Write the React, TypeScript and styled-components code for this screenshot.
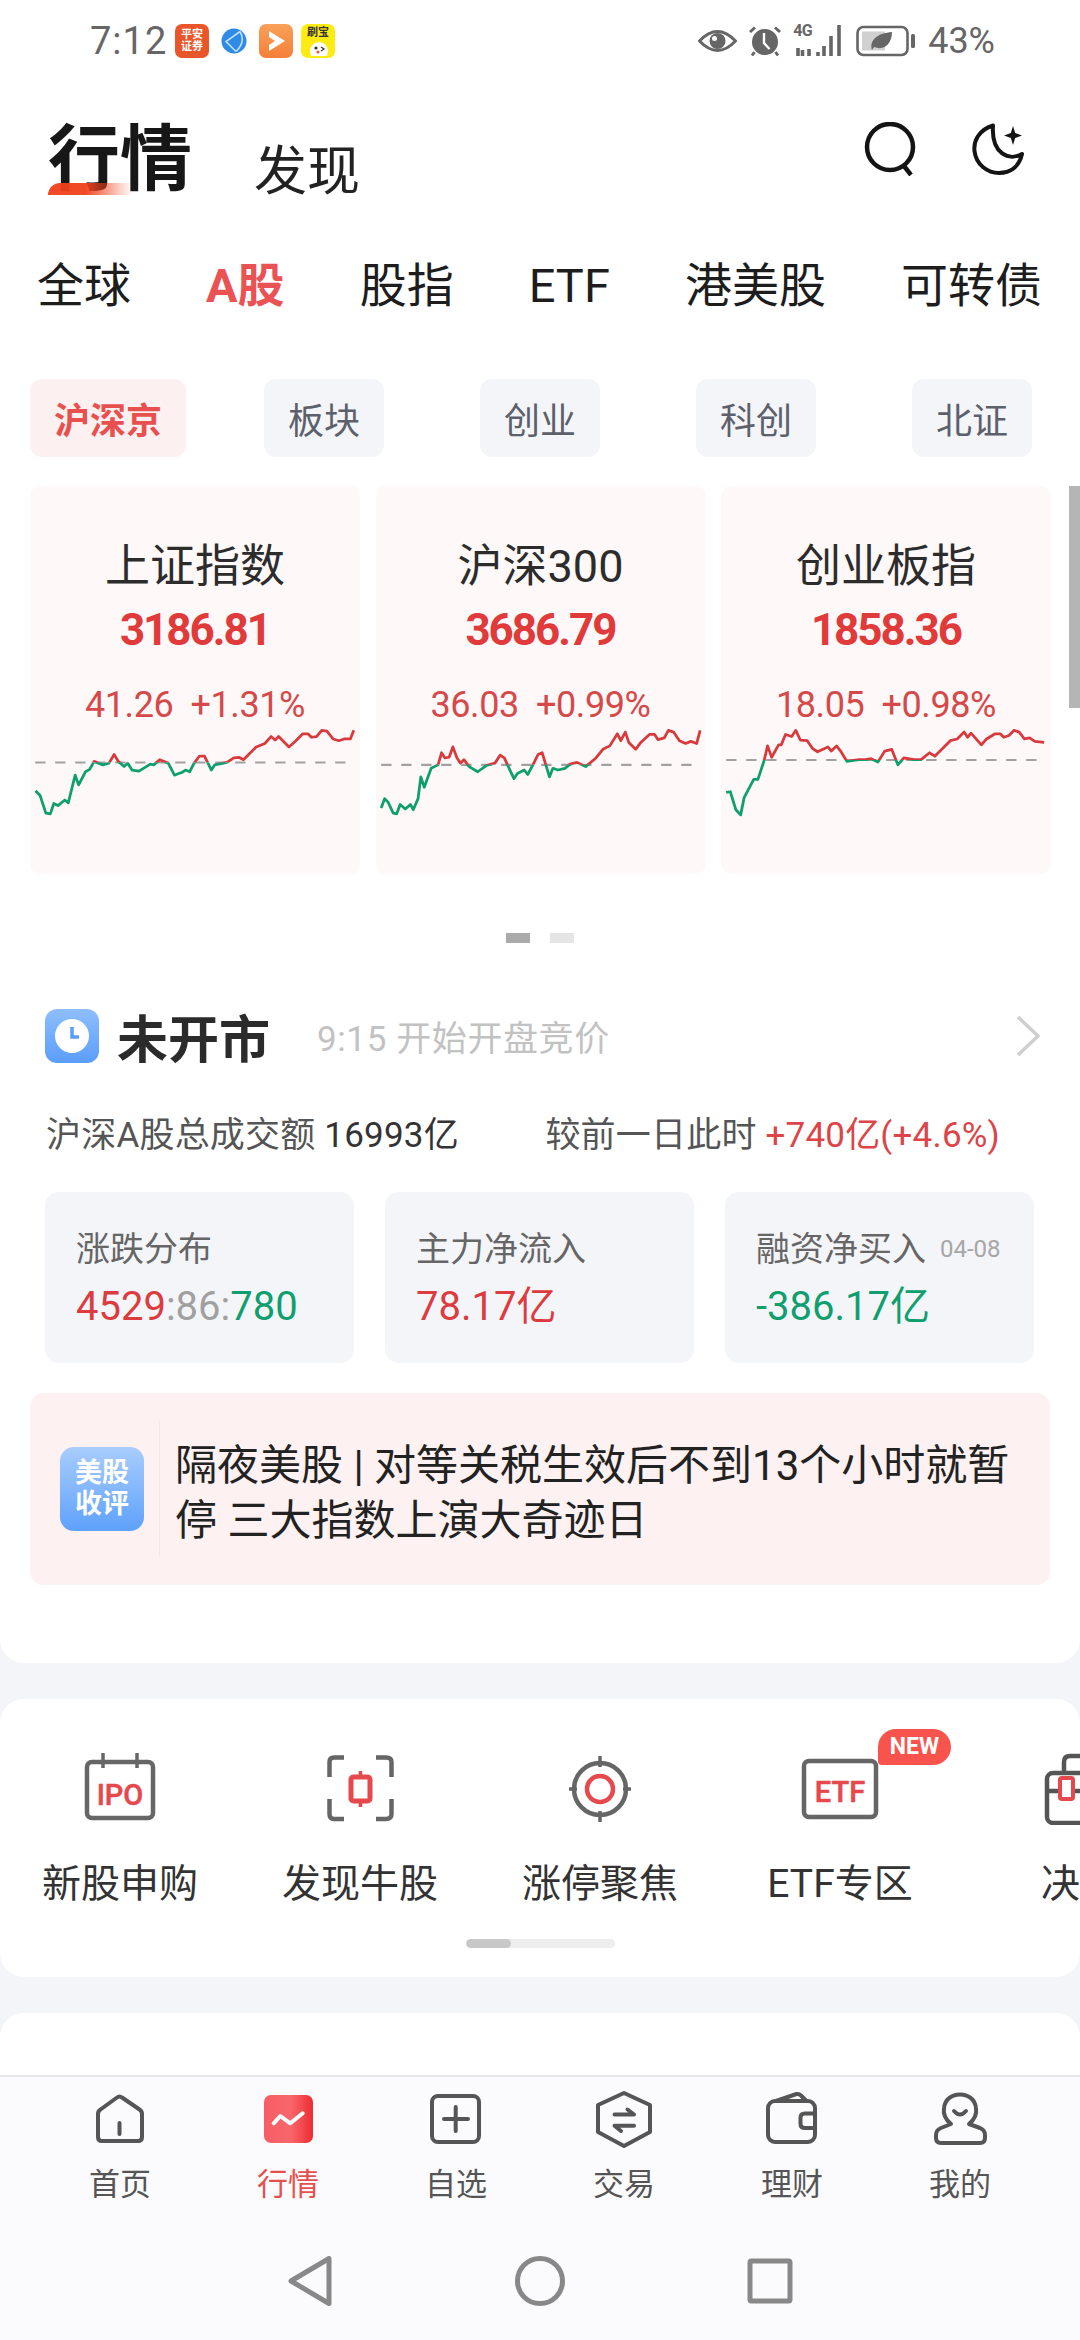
import React from "react";
import styled, { createGlobalStyle } from "styled-components";

const Global = createGlobalStyle`
  html, body { margin: 0; padding: 0; background: #f4f5f9; }
  body { font-family: Roboto, "Noto Sans CJK SC", sans-serif; }
  * { box-sizing: border-box; }
`;

const Page = styled.div`
  position: relative;
  width: 1080px;
  height: 2340px;
  overflow: hidden;
  display: flex;
  flex-direction: column;
  background: #f4f5f9;
`;
const Main = styled.main`
  flex: 1;
  min-height: 0;
  display: flex;
  flex-direction: column;
  overflow: hidden;
`;
const TopPanel = styled.section`
  position: relative;
  background: #fff;
  border-radius: 0 0 24px 24px;
  padding-bottom: 78px;
`;
const StatusBar = styled.div`
  height: 82px;
  display: flex;
  align-items: center;
  padding: 0 85px 0 90px;
  color: #666;
`;
const Time = styled.span`
  font-size: 38px;
  line-height: 82px;
  width: 85px;
  letter-spacing: 1px;
`;
const AppIcons = styled.div`
  display: flex;
  align-items: center;
  gap: 8px;
`;
const AppTile = styled.div<{ $bg: string }>`
  width: 34px;
  height: 34px;
  border-radius: 7px;
  background: ${(p) => p.$bg};
  display: flex;
  flex-direction: column;
  align-items: center;
  justify-content: center;
  color: #fff;
  font-size: 11px;
  line-height: 12px;
  font-weight: 700;
  overflow: hidden;
`;
const GlobeWrap = styled.div`
  display: flex;
  margin: 0 4px;
`;
const YellowLabel = styled.span`
  color: #333;
  font-size: 11px;
  line-height: 13px;
  font-weight: 700;
`;
const StatusRight = styled.div`
  margin-left: auto;
  display: flex;
  align-items: center;
  gap: 11px;
`;
const SignalWrap = styled.div`
  position: relative;
  width: 50px;
  height: 32px;
  margin-right: 2px;
`;
const FourG = styled.span`
  position: absolute;
  left: 0;
  top: -3px;
  font-size: 16px;
  line-height: 17px;
  font-weight: 700;
  letter-spacing: -0.5px;
  color: #666;
`;
const Percent = styled.span`
  font-size: 36px;
  line-height: 40px;
  color: #666;
  margin-left: 1px;
`;
const Header = styled.header`
  position: relative;
  height: 113px;
  padding: 42px 56px 0 48px;
  display: flex;
  align-items: flex-start;
`;
const TitleActive = styled.h1`
  position: relative;
  margin: 0;
  font-size: 72px;
  line-height: 72px;
  font-weight: 700;
  color: #171717;
  &::before {
    content: "";
    position: absolute;
    left: 0;
    top: 59px;
    width: 84px;
    height: 12px;
    border-radius: 12px 0 0 0;
    background: linear-gradient(90deg, #f0401a 0%, #f0401a 45%, rgba(240, 64, 26, 0) 100%);
    opacity: 0.95;
  }
`;
const TitleOther = styled.span`
  margin: 20px 0 0 62px;
  font-size: 53px;
  line-height: 56px;
  color: #222;
`;
const HeaderIcons = styled.div`
  margin-left: auto;
  margin-top: -2px;
  display: flex;
  gap: 56px;
`;
const Tabs = styled.nav`
  margin-top: 66px;
  padding: 0 38px 0 37px;
  display: flex;
  justify-content: space-between;
`;
const Tab = styled.span<{ $active?: boolean }>`
  font-size: 47px;
  line-height: 50px;
  color: ${(p) => (p.$active ? "#ea5254" : "#1d1d1d")};
  font-weight: ${(p) => (p.$active ? 700 : 400)};
`;
const Chips = styled.div`
  margin-top: 68px;
  display: grid;
  grid-template-columns: repeat(5, 216px);
  justify-items: center;
`;
const Chip = styled.span<{ $active?: boolean }>`
  height: 78px;
  width: ${(p) => (p.$active ? 156 : 120)}px;
  border-radius: 12px;
  display: flex;
  align-items: center;
  justify-content: center;
  font-size: 36px;
  background: ${(p) => (p.$active ? "#fdf0f0" : "#f4f5f9")};
  color: ${(p) => (p.$active ? "#e8504f" : "#5c606b")};
  font-weight: ${(p) => (p.$active ? 700 : 400)};
`;
const Cards = styled.div`
  margin-top: 29px;
  padding-left: 30px;
  display: flex;
  gap: 15.5px;
`;
const Thumb = styled.div`
  position: absolute;
  right: 0;
  top: 486px;
  width: 11px;
  height: 222px;
  background: #b5b5b5;
`;
const IndexCard = styled.article`
  width: 330px;
  height: 388px;
  border-radius: 10px;
  background: #fef8f8;
  padding-top: 57px;
  display: flex;
  flex-direction: column;
  align-items: center;
`;
const IndexName = styled.div`
  font-size: 45px;
  line-height: 48px;
  color: #2c2c2c;
`;
const IndexValue = styled.div`
  margin-top: 16px;
  font-size: 44px;
  line-height: 46px;
  font-weight: 700;
  letter-spacing: -2px;
  color: #e03a3a;
`;
const IndexChange = styled.div`
  margin-top: 34px;
  font-size: 36px;
  line-height: 36px;
  letter-spacing: -0.4px;
  color: #d5494b;
  white-space: pre;
`;
const ChartSvg = styled.svg`
  display: block;
  margin-top: -3px;
  width: 330px;
  height: 103.5px;
  flex-shrink: 0;
`;
const Dots = styled.div`
  margin-top: 59px;
  display: flex;
  justify-content: center;
  gap: 20px;
`;
const Dot = styled.span<{ $on?: boolean }>`
  width: 24px;
  height: 10px;
  background: ${(p) => (p.$on ? "#aaa" : "#e5e5e5")};
`;
const StatusRow = styled.div`
  margin-top: 66px;
  height: 54px;
  padding: 0 40px 0 45px;
  display: flex;
  align-items: center;
`;
const ClockTile = styled.div`
  width: 54px;
  height: 54px;
  border-radius: 12px;
  background: linear-gradient(180deg, #8fbefc 0%, #5a9efa 100%);
  display: flex;
  align-items: center;
  justify-content: center;
`;
const MarketTitle = styled.span`
  margin-left: 18px;
  align-self: flex-start;
  font-size: 51px;
  line-height: 64px;
  font-weight: 700;
  color: #2b2b2b;
`;
const MarketSub = styled.span`
  margin-left: 47px;
  align-self: flex-start;
  font-size: 35px;
  line-height: 62px;
  color: #c2c2c2;
  letter-spacing: 0.6px;
`;
const ChevronWrap = styled.span`
  margin-left: auto;
  display: flex;
`;
const SummaryRow = styled.div`
  margin-top: 52px;
  padding: 0 80px 0 46px;
  display: flex;
  justify-content: space-between;
  font-size: 35px;
  line-height: 41px;
  letter-spacing: 0.2px;
  color: #555;
`;
const Strong = styled.span`
  color: #333;
`;
const RedText = styled.span`
  color: #dc4448;
`;
const Stats = styled.div`
  margin-top: 36px;
  padding: 0 46px 0 45px;
  display: flex;
  gap: 31px;
`;
const StatCard = styled.div`
  width: 309px;
  height: 171px;
  border-radius: 14px;
  background: #f4f5f9;
  padding: 37px 0 0 31px;
`;
const StatLabel = styled.div`
  display: flex;
  align-items: center;
  font-size: 34px;
  line-height: 40px;
  color: #666;
`;
const StatDate = styled.span`
  margin-left: 14px;
  font-size: 24px;
  color: #a6a6a6;
`;
const StatValue = styled.div<{ $color?: string }>`
  margin-top: 15px;
  font-size: 40px;
  line-height: 46px;
  color: ${(p) => p.$color ?? "#333"};
`;
const Seg = styled.span<{ $color: string }>`
  color: ${(p) => p.$color};
`;
const Banner = styled.div`
  margin: 30px 30px 0 30px;
  height: 192px;
  border-radius: 14px;
  background: #fdf1f1;
  padding-left: 30px;
  display: flex;
  align-items: center;
`;
const BannerBadge = styled.div`
  width: 84px;
  height: 84px;
  flex-shrink: 0;
  border-radius: 14px;
  background: linear-gradient(180deg, #a9cdfd 0%, #5ea1fb 100%);
  color: #fff;
  font-size: 27px;
  line-height: 31px;
  font-weight: 700;
  text-align: center;
  padding-top: 11px;
`;
const BannerRule = styled.div`
  width: 1px;
  height: 136px;
  margin: 0 15px 0 15px;
  background: #f8e6e6;
`;
const BannerText = styled.p`
  margin: 0;
  width: 850px;
  padding-top: 8px;
  font-size: 42px;
  line-height: 55px;
  color: #222;
`;
const ShortcutPanel = styled.section`
  margin-top: 36px;
  height: 278px;
  background: #fff;
  border-radius: 24px;
  padding-top: 20px;
  overflow: hidden;
`;
const ShortcutRow = styled.div`
  display: flex;
  width: 1080px;
  padding: 34px 0 14px;
  overflow: hidden;
`;
const Shortcut = styled.div`
  position: relative;
  flex: 0 0 240px;
  display: flex;
  flex-direction: column;
  align-items: center;
`;
const ShortcutLabel = styled.div`
  margin-top: 38px;
  font-size: 39px;
  line-height: 42px;
  color: #333;
  white-space: nowrap;
`;
const NewBadge = styled.span`
  position: absolute;
  left: 158px;
  top: -24px;
  width: 73px;
  height: 36px;
  border-radius: 18px 18px 18px 4px;
  background: #f9534d;
  color: #fff;
  font-size: 23px;
  line-height: 36px;
  font-weight: 700;
  text-align: center;
`;
const Indicator = styled.div`
  position: relative;
  margin: 20px auto 0;
  width: 149px;
  height: 9px;
  border-radius: 5px;
  background: #eee;
  overflow: hidden;
  &::before {
    content: "";
    position: absolute;
    left: 0;
    top: 0;
    bottom: 0;
    width: 45px;
    border-radius: 5px;
    background: #c8c8c8;
  }
`;
const NextPanel = styled.section`
  margin-top: 36px;
  flex: 1;
  background: #fff;
  border-radius: 24px 24px 0 0;
`;
const BottomArea = styled.footer`
  height: 265px;
  flex-shrink: 0;
  background: #fbfbfd;
  border-top: 2px solid #e6e6e6;
  padding-top: 13px;
`;
const TabBar = styled.nav`
  padding: 0 36px;
  display: grid;
  grid-template-columns: repeat(6, 168px);
`;
const BarItem = styled.div<{ $active?: boolean }>`
  display: flex;
  flex-direction: column;
  align-items: center;
  color: ${(p) => (p.$active ? "#e5504f" : "#555")};
`;
const BarLabel = styled.span`
  margin-top: 19px;
  font-size: 31px;
  line-height: 36px;
`;
const SystemNav = styled.div`
  margin-top: 53px;
  display: flex;
  justify-content: center;
  gap: 180px;
`;
const Icon = styled.svg`
  display: block;
  flex-shrink: 0;
`;

const C1 = [105,1245,118,1258,135,1310,148,1312,158,1282,170,1288,190,1272,200,1280,220,1200,230,1228,250,1190,262,1183,275,1160,300,1170,318,1165,333,1140,345,1160,362,1175,372,1165,385,1185,405,1188,438,1168,448,1170,465,1155,490,1165,508,1200,520,1195,530,1192,540,1185,552,1190,565,1165,580,1145,595,1145,615,1185,625,1170,660,1163,680,1150,695,1148,708,1155,745,1118,770,1108,788,1088,800,1098,810,1088,840,1118,860,1100,880,1080,895,1080,905,1090,920,1088,935,1070,950,1072,968,1095,985,1100,1000,1095,1018,1095,1028,1070];
const C2 = [1105,1295,1115,1268,1125,1278,1140,1310,1150,1312,1160,1285,1175,1298,1190,1285,1198,1300,1212,1268,1220,1205,1230,1235,1250,1180,1270,1170,1280,1135,1290,1150,1302,1148,1313,1118,1325,1150,1335,1165,1345,1155,1360,1175,1385,1190,1410,1172,1435,1165,1450,1142,1462,1150,1490,1210,1500,1195,1520,1185,1530,1198,1545,1170,1560,1140,1572,1135,1593,1205,1603,1180,1618,1185,1638,1180,1653,1168,1673,1163,1698,1175,1728,1150,1748,1125,1768,1115,1790,1080,1800,1100,1813,1075,1823,1105,1843,1125,1858,1105,1883,1082,1898,1082,1908,1097,1926,1092,1938,1070,1953,1075,1970,1100,1988,1108,2003,1102,2020,1108,2030,1070];
const C3 = [540,1250,552,1248,568,1300,582,1315,592,1265,620,1212,632,1212,650,1158,660,1115,672,1148,692,1112,700,1112,712,1082,730,1088,742,1070,755,1098,775,1100,790,1122,805,1132,835,1118,845,1130,860,1115,872,1130,890,1160,925,1155,945,1155,960,1152,980,1162,1000,1130,1020,1125,1038,1170,1055,1150,1085,1155,1105,1155,1130,1135,1145,1145,1190,1100,1210,1095,1230,1075,1240,1090,1250,1078,1280,1112,1295,1095,1320,1080,1335,1080,1345,1090,1360,1085,1375,1070,1390,1075,1405,1095,1420,1092,1435,1102,1462,1105];

function Chart({ id, pts, base, x0 }: { id: string; pts: number[]; base: number; x0: number }) {
  const points = pts.join(",");
  return (
    <ChartSvg viewBox={`${x0} 1040 957 300`} preserveAspectRatio="none">
      <defs>
        <clipPath id={`${id}a`}><rect x={x0} y={1000} width={957} height={base - 1000} /></clipPath>
        <clipPath id={`${id}b`}><rect x={x0} y={base} width={957} height={400} /></clipPath>
      </defs>
      <line x1={x0 + 15} x2={x0 + 917} y1={base} y2={base} stroke="#a3a0a3" strokeWidth={6} strokeDasharray="30 28" />
      <polyline points={points} fill="none" stroke="#d8393c" strokeWidth={8} strokeLinejoin="round" clipPath={`url(#${id}a)`} />
      <polyline points={points} fill="none" stroke="#0f9f6e" strokeWidth={8} strokeLinejoin="round" clipPath={`url(#${id}b)`} />
    </ChartSvg>
  );
}

const svgText = { fontFamily: "Roboto, sans-serif", fontWeight: 500, textAnchor: "middle" as const };
const RED = "#e5484d";
const GR = "#666";

const IpoIcon = () => (
  <Icon width={80} height={72} viewBox="0 0 80 72" fill="none">
    <rect x="7" y="9" width="66" height="56" rx="5" stroke={GR} strokeWidth="4.5" />
    <path d="M23 0V15M57 0V15" stroke={GR} strokeWidth="3.5" />
    <text x="40" y="52" fontSize="29" fill={RED} style={svgText} stroke={RED} strokeWidth=".5">IPO</text>
  </Icon>
);
const CandleIcon = () => (
  <Icon width={80} height={72} viewBox="0 0 80 72" fill="none">
    <path d="M24 4.5H14Q9.5 4.5 9.5 9V24M56 4.5H66Q71.5 4.5 71.5 9V24M24 66H14Q9.5 66 9.5 61V46M56 66H66Q71.5 66 71.5 61V46" stroke={GR} strokeWidth="4.5" />
    <rect x="31" y="24" width="19" height="24" rx="2.5" stroke={RED} strokeWidth="5" fill="#fff" />
    <path d="M40.5 18V25M40.5 47V54" stroke={RED} strokeWidth="3.5" />
  </Icon>
);
const TargetIcon = () => (
  <Icon width={80} height={72} viewBox="0 0 80 72" fill="none">
    <circle cx="40" cy="36" r="26" stroke={GR} strokeWidth="4.5" />
    <path d="M40 3V14M40 58V69M9 36H17M63 36H71" stroke={GR} strokeWidth="3.5" />
    <circle cx="40" cy="36" r="13" stroke={RED} strokeWidth="4.5" />
  </Icon>
);
const EtfIcon = () => (
  <Icon width={80} height={72} viewBox="0 0 80 72" fill="none">
    <rect x="4" y="8" width="72" height="56" rx="5" stroke={GR} strokeWidth="4.5" />
    <text x="40" y="49" fontSize="29" fill={RED} style={svgText} stroke={RED} strokeWidth=".5">ETF</text>
  </Icon>
);
const CaseIcon = () => (
  <Icon width={80} height={72} viewBox="0 0 80 72" fill="none">
    <rect x="7" y="20" width="68" height="50" rx="6" stroke="#555" strokeWidth="4.5" />
    <path d="M24 20V9Q24 3 30 3H52Q58 3 58 9V20M7 38H75" stroke="#555" strokeWidth="4.5" />
    <rect x="20" y="25" width="13" height="21" rx="2" stroke={RED} strokeWidth="4" fill="#fff" />
  </Icon>
);
const bar = { fill: "none", stroke: "#555", strokeWidth: 4, strokeLinejoin: "round" as const, strokeLinecap: "round" as const };

const HomeIcon = () => (
  <Icon width={60} height={58} viewBox="0 0 60 58">
    <path {...bar} d="M8 24Q8 21 10.5 19.5L27 7.5Q29.5 5.5 32 7.5L49.5 19.5Q52 21 52 24V47Q52 51 48 51H12Q8 51 8 47Z" />
    <path {...bar} d="M29.5 33V44" />
  </Icon>
);
const MarketIcon = () => (
  <Icon width={60} height={58} viewBox="0 0 60 58">
    <defs>
      <linearGradient id="mk" x1="0" x2="1" y1="0" y2="0">
        <stop offset="0" stopColor="#f65e64" />
        <stop offset=".55" stopColor="#f8666b" />
        <stop offset="1" stopColor="#ee2c31" />
      </linearGradient>
    </defs>
    <rect x="6" y="5" width="49" height="48" rx="7" fill="url(#mk)" />
    <path d="M15.7 33.3L22.3 26L32.3 33.3L44.7 23.3" fill="none" stroke="#fff" strokeWidth="4" strokeLinecap="round" strokeLinejoin="round" />
  </Icon>
);
const PlusIcon = () => (
  <Icon width={60} height={58} viewBox="0 0 60 58">
    <rect {...bar} x="6" y="6" width="47" height="46" rx="6" />
    <path {...bar} d="M29.7 17V41M18 29H42" />
  </Icon>
);
const TradeIcon = () => (
  <Icon width={60} height={58} viewBox="0 0 60 58">
    <path {...bar} d="M30 3L56 15V42L30 56L4 42V15Z" />
    <path {...bar} d="M20.5 24.5H40L33.5 19.5M40 35.7H20.5L27 41" />
  </Icon>
);
const WalletIcon = () => (
  <Icon width={60} height={58} viewBox="0 0 60 58">
    <rect {...bar} x="6" y="11" width="47" height="41" rx="7" />
    <path {...bar} d="M14 11L34.5 4Q37 3.5 39 5.5L44.5 11" />
    <path {...bar} d="M53 23.5H43Q38.5 23.5 38.5 27.5V34Q38.5 38 43 38H53" />
  </Icon>
);
const UserIcon = () => (
  <Icon width={60} height={58} viewBox="0 0 60 58">
    <path {...bar} d="M21 34C15 29 13 24 14 18C15 9 22 4.5 30 4.5C38 4.5 45 9 46 18C47 24 45 29 39 34L50 38Q55 40 55 45V48Q55 53 50 53H11Q6 53 6 48V45Q6 40 11 38Z" />
    <path {...bar} d="M24 21Q30 28 36 21" />
  </Icon>
);

const navStroke = { fill: "none", stroke: "#888", strokeWidth: 5, strokeLinejoin: "round" as const };

export default function App() {
  return (
    <Page>
      <Global />
      <Main>
        <TopPanel>
          <StatusBar>
            <Time>7:12</Time>
            <AppIcons>
              <AppTile $bg="#e9562a"><span>平安</span><span>证券</span></AppTile>
              <GlobeWrap>
                <Icon width={26} height={26} viewBox="0 0 26 26">
                  <circle cx="13" cy="13" r="12.5" fill="#2f8be6" />
                  <path d="M19 3.5L5 13.5L15 23.5M19 3.5Q25 14 15 23.5" fill="none" stroke="#bfe0fb" strokeWidth="1.6" />
                </Icon>
              </GlobeWrap>
              <AppTile $bg="linear-gradient(180deg,#f9a159,#f57f38)">
                <Icon width={24} height={26} viewBox="0 0 24 26">
                  <path d="M5 3L21 13L5 23V17L11 13L5 9Z" fill="#fff" />
                </Icon>
              </AppTile>
              <AppTile $bg="#fdeb12">
                <YellowLabel>刷宝</YellowLabel>
                <Icon width={26} height={17} viewBox="0 0 26 17">
                  <circle cx="14" cy="12" r="9" fill="#fff" />
                  <circle cx="11" cy="9" r="1.6" fill="#333" />
                  <path d="M16 8L19 10L16 12" fill="none" stroke="#333" strokeWidth="1.2" />
                  <circle cx="13" cy="13" r="1.5" fill="#e8513a" />
                </Icon>
              </AppTile>
            </AppIcons>
            <StatusRight>
              <Icon width={39} height={26} viewBox="0 0 39 26">
                <path d="M1.5 13Q19.5 -6 37.5 13Q19.5 32 1.5 13Z" fill="none" stroke="#666" strokeWidth="3" />
                <circle cx="19.5" cy="13" r="8" fill="#666" />
                <circle cx="16.5" cy="10.5" r="2.5" fill="#fff" />
              </Icon>
              <Icon width={34} height={32} viewBox="0 0 33 32">
                <circle cx="16.5" cy="17" r="13" fill="#666" />
                <path d="M15.5 8V18L21 24" fill="none" stroke="#fff" strokeWidth="2.4" />
                <path d="M1.5 7L6.5 2.5M31.5 7L26.5 2.5M6 27L3.5 30.5M27 27L29.5 30.5" stroke="#666" strokeWidth="3" />
              </Icon>
              <SignalWrap>
                <FourG>4G</FourG>
                <Icon width={50} height={32} viewBox="0 0 50 32">
                  <path d="M3 31V23M7.5 31V25M14 31V24M23 31V27M29 31V21M36 31V11M44 31V0" stroke="#666" strokeWidth="3.6" transform="translate(2 0)" />
                </Icon>
              </SignalWrap>
              <Icon width={60} height={32} viewBox="0 0 60 32">
                <rect x="1.5" y="2" width="50" height="28" rx="6" fill="none" stroke="#666" strokeWidth="2.6" />
                <rect x="6" y="6.5" width="23" height="19" fill="#d0d0d0" />
                <path d="M16 25C13 15 22 8 36 7C36 19 28 26 18 22" fill="#666" />
                <rect x="55" y="9" width="4" height="14" rx="1.5" fill="#666" />
              </Icon>
              <Percent>43%</Percent>
            </StatusRight>
          </StatusBar>
          <Header>
            <TitleActive>行情</TitleActive>
            <TitleOther>发现</TitleOther>
            <HeaderIcons>
              <Icon width={52} height={54} viewBox="0 0 52 54" fill="none">
                <circle cx="26" cy="25" r="23" stroke="#141414" strokeWidth="4.5" />
                <path d="M40 44L47 53" stroke="#141414" strokeWidth="4.5" />
              </Icon>
              <Icon width={52} height={54} viewBox="0 0 52 54" fill="none">
                <path d="M21 3.5C6 8 1.5 20 2.5 29C4 43 16 51 27 51C38 51 47 45 50 32C38 39 19 33 21 3.5Z" stroke="#141414" strokeWidth="4" strokeLinejoin="round" />
                <path d="M41 4L43.2 11L50 13.5L43.2 16L41 23L38.8 16L32 13.5L38.8 11Z" fill="#141414" />
              </Icon>
            </HeaderIcons>
          </Header>
          <Tabs>
            <Tab>全球</Tab>
            <Tab $active>A股</Tab>
            <Tab>股指</Tab>
            <Tab>ETF</Tab>
            <Tab>港美股</Tab>
            <Tab>可转债</Tab>
          </Tabs>
          <Chips>
            <Chip $active>沪深京</Chip>
            <Chip>板块</Chip>
            <Chip>创业</Chip>
            <Chip>科创</Chip>
            <Chip>北证</Chip>
          </Chips>
          <Cards>
            <IndexCard>
              <IndexName>上证指数</IndexName>
              <IndexValue>3186.81</IndexValue>
              <IndexChange>41.26  +1.31%</IndexChange>
              <Chart id="c1" pts={C1} base={1163} x0={89} />
            </IndexCard>
            <IndexCard>
              <IndexName>沪深300</IndexName>
              <IndexValue>3686.79</IndexValue>
              <IndexChange>36.03  +0.99%</IndexChange>
              <Chart id="c2" pts={C2} base={1170} x0={1090} />
            </IndexCard>
            <IndexCard>
              <IndexName>创业板指</IndexName>
              <IndexValue>1858.36</IndexValue>
              <IndexChange>18.05  +0.98%</IndexChange>
              <Chart id="c3" pts={C3} base={1156} x0={525} />
            </IndexCard>
          </Cards>
          <Thumb />
          <Dots>
            <Dot $on />
            <Dot />
          </Dots>
          <StatusRow>
            <ClockTile>
              <Icon width={36} height={36} viewBox="0 0 36 36">
                <circle cx="18" cy="18" r="17" fill="#fff" />
                <path d="M18 9V19H25" fill="none" stroke="#5a9efa" strokeWidth="3.5" />
              </Icon>
            </ClockTile>
            <MarketTitle>未开市</MarketTitle>
            <MarketSub>9:15 开始开盘竞价</MarketSub>
            <ChevronWrap>
              <Icon width={24} height={42} viewBox="0 0 24 42" fill="none">
                <path d="M2 2L22 21L2 40" stroke="#cfcfcf" strokeWidth="3.5" />
              </Icon>
            </ChevronWrap>
          </StatusRow>
          <SummaryRow>
            <span>沪深A股总成交额 <Strong>16993亿</Strong></span>
            <span>较前一日此时 <RedText>+740亿(+4.6%)</RedText></span>
          </SummaryRow>
          <Stats>
            <StatCard>
              <StatLabel>涨跌分布</StatLabel>
              <StatValue>
                <Seg $color="#dd3b3f">4529</Seg>
                <Seg $color="#a0a0a0">:86:</Seg>
                <Seg $color="#0f9f6e">780</Seg>
              </StatValue>
            </StatCard>
            <StatCard>
              <StatLabel>主力净流入</StatLabel>
              <StatValue $color="#dd3b3f">78.17亿</StatValue>
            </StatCard>
            <StatCard>
              <StatLabel>融资净买入<StatDate>04-08</StatDate></StatLabel>
              <StatValue $color="#0f9f6e">-386.17亿</StatValue>
            </StatCard>
          </Stats>
          <Banner>
            <BannerBadge>美股<br />收评</BannerBadge>
            <BannerRule />
            <BannerText>隔夜美股 | 对等关税生效后不到13个小时就暂停 三大指数上演大奇迹日</BannerText>
          </Banner>
        </TopPanel>
        <ShortcutPanel>
          <ShortcutRow>
            <Shortcut><IpoIcon /><ShortcutLabel>新股申购</ShortcutLabel></Shortcut>
            <Shortcut><CandleIcon /><ShortcutLabel>发现牛股</ShortcutLabel></Shortcut>
            <Shortcut><TargetIcon /><ShortcutLabel>涨停聚焦</ShortcutLabel></Shortcut>
            <Shortcut><EtfIcon /><NewBadge>NEW</NewBadge><ShortcutLabel>ETF专区</ShortcutLabel></Shortcut>
            <Shortcut><CaseIcon /><ShortcutLabel>决策</ShortcutLabel></Shortcut>
          </ShortcutRow>
          <Indicator />
        </ShortcutPanel>
        <NextPanel />
      </Main>
      <BottomArea>
        <TabBar>
          <BarItem><HomeIcon /><BarLabel>首页</BarLabel></BarItem>
          <BarItem $active><MarketIcon /><BarLabel>行情</BarLabel></BarItem>
          <BarItem><PlusIcon /><BarLabel>自选</BarLabel></BarItem>
          <BarItem><TradeIcon /><BarLabel>交易</BarLabel></BarItem>
          <BarItem><WalletIcon /><BarLabel>理财</BarLabel></BarItem>
          <BarItem><UserIcon /><BarLabel>我的</BarLabel></BarItem>
        </TabBar>
        <SystemNav>
          <Icon width={50} height={50} viewBox="0 0 50 50">
            <path {...navStroke} d="M44 2.5V47.5L6 25Z" />
          </Icon>
          <Icon width={50} height={50} viewBox="0 0 50 50">
            <circle {...navStroke} cx="25" cy="25" r="22.5" />
          </Icon>
          <Icon width={50} height={50} viewBox="0 0 50 50">
            <rect {...navStroke} x="5" y="5" width="40" height="40" rx="1.5" />
          </Icon>
        </SystemNav>
      </BottomArea>
    </Page>
  );
}
